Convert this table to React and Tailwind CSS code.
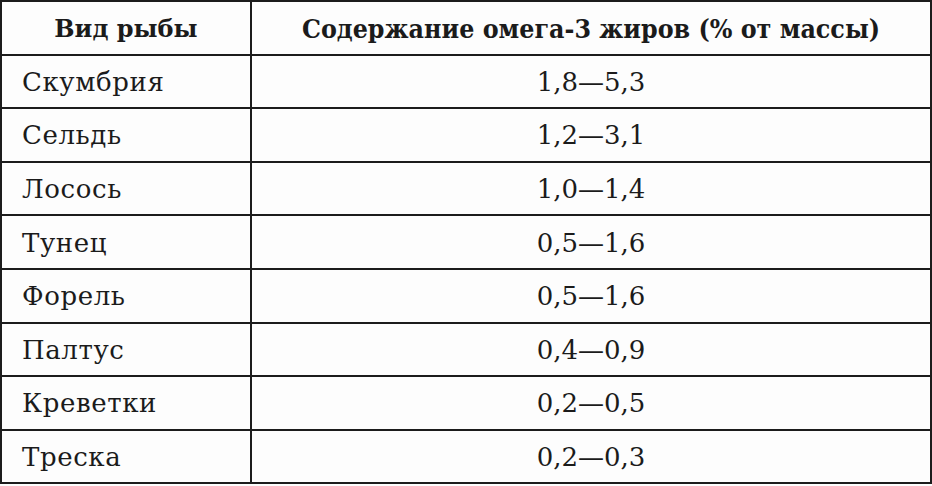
import React from "react";

const rows = [
  ["Скумбрия", "1,8—5,3"],
  ["Сельдь", "1,2—3,1"],
  ["Лосось", "1,0—1,4"],
  ["Тунец", "0,5—1,6"],
  ["Форель", "0,5—1,6"],
  ["Палтус", "0,4—0,9"],
  ["Креветки", "0,2—0,5"],
  ["Треска", "0,2—0,3"],
];

export default function App() {
  return (
    <div className="w-[932px] h-[486px] bg-[#fdfdfd] text-[#1b1b1b] font-['DejaVu_Serif',serif] overflow-hidden">
      <div className="grid grid-cols-[250px_680px] border-l-2 border-t-2 border-[#1c1c1c] w-[932px]">
        <div className="h-[53.6px] border-r-2 border-b-2 border-[#1c1c1c] flex items-center justify-center pt-[2px] text-[24px] font-bold">
          Вид рыбы
        </div>
        <div className="h-[53.6px] border-r-2 border-b-2 border-[#1c1c1c] flex items-center justify-center pt-[2px] text-[26.5px] font-bold font-['DejaVu_Serif_Condensed','DejaVu_Serif',serif] font-stretch-condensed">
          Содержание омега-3 жиров (% от массы)
        </div>
        {rows.map(([a, b]) => (
          <React.Fragment key={a}>
            <div className="h-[53.6px] border-r-2 border-b-2 border-[#1c1c1c] flex items-center pl-[20px] pt-[2px] text-[26px] tracking-[0.6px]">
              {a}
            </div>
            <div className="h-[53.6px] border-r-2 border-b-2 border-[#1c1c1c] flex items-center justify-center pt-[2px] text-[26px]">
              {b}
            </div>
          </React.Fragment>
        ))}
      </div>
    </div>
  );
}
